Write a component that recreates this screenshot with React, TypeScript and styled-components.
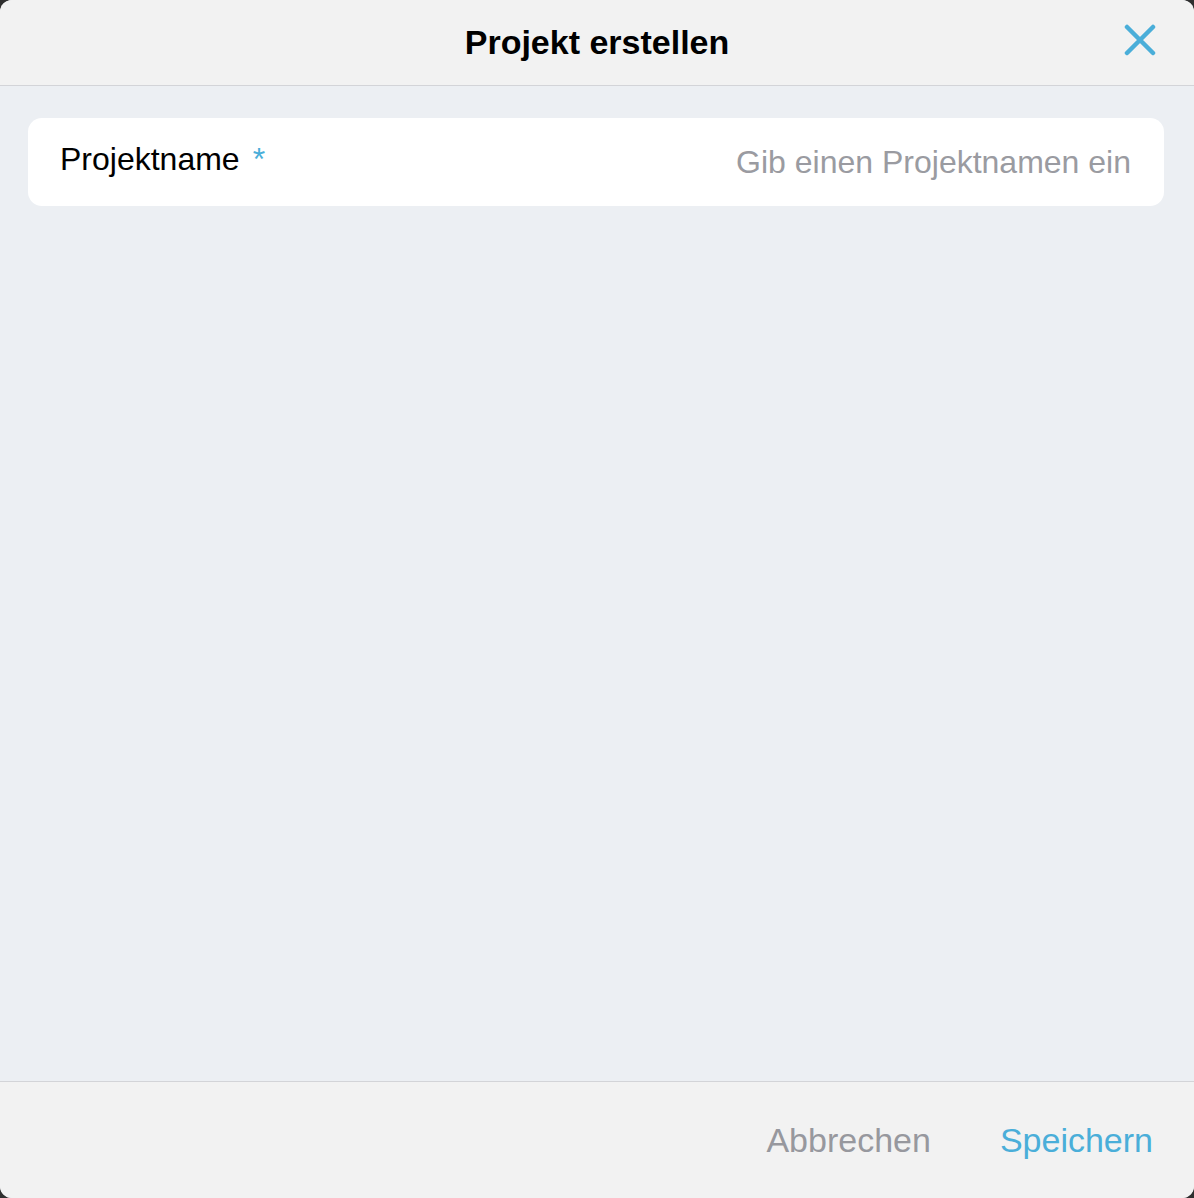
import styled, { createGlobalStyle } from 'styled-components';

const GlobalStyle = createGlobalStyle`
  html, body {
    margin: 0;
    padding: 0;
    background: #2f2f2f;
  }
  * {
    box-sizing: border-box;
  }
`;

const Modal = styled.div`
  width: 1194px;
  height: 1198px;
  display: flex;
  flex-direction: column;
  background: #eceff3;
  border-radius: 12px;
  overflow: hidden;
  font-family: 'Liberation Sans', Arial, sans-serif;
`;

const Header = styled.header`
  height: 86px;
  flex-shrink: 0;
  display: grid;
  grid-template-columns: 1fr auto 1fr;
  align-items: center;
  padding: 0 32px 0 32px;
  background: #f2f2f2;
  border-bottom: 1px solid #d3d4d8;
`;

const Title = styled.h1`
  grid-column: 2;
  margin: 0;
  font-size: 34px;
  font-weight: 700;
  color: #000;
`;

const CloseButton = styled.button`
  justify-self: end;
  width: 44px;
  height: 44px;
  margin-bottom: 6px;
  display: flex;
  align-items: center;
  justify-content: center;
  padding: 0;
  border: none;
  background: none;
  cursor: pointer;
`;

const Body = styled.main`
  flex: 1;
  padding: 32px 30px 32px 28px;
`;

const Field = styled.label`
  height: 88px;
  display: flex;
  align-items: center;
  justify-content: space-between;
  padding: 0 31px 0 32px;
  background: #fff;
  border-radius: 14px;
`;

const FieldLabel = styled.span`
  font-size: 32px;
  color: #000;
  margin-bottom: 5px;
`;

const Required = styled.span`
  margin-left: 13px;
  color: #4aaed9;
`;

const Input = styled.input`
  flex: 1;
  min-width: 0;
  border: none;
  outline: none;
  background: transparent;
  text-align: right;
  font-family: inherit;
  font-size: 32px;
  color: #000;

  &::placeholder {
    color: #9a9ba1;
  }
`;

const Footer = styled.footer`
  height: 117px;
  flex-shrink: 0;
  display: flex;
  align-items: center;
  justify-content: flex-end;
  gap: 69px;
  padding: 0 41px 0 0;
  background: #f2f2f2;
  border-top: 1px solid #d3d4d8;
`;

const TextButton = styled.button<{ $primary?: boolean }>`
  padding: 0;
  border: none;
  background: none;
  font-family: inherit;
  font-size: 34px;
  color: ${(p) => (p.$primary ? '#4aaed9' : '#97989e')};
  cursor: pointer;
`;

function CloseIcon() {
  return (
    <svg width="32" height="32" viewBox="0 0 32 32" fill="none">
      <path
        d="M3 3 L29 29 M29 3 L3 29"
        stroke="#4aaed9"
        strokeWidth="4.5"
        strokeLinecap="round"
      />
    </svg>
  );
}

export default function App() {
  return (
    <>
      <GlobalStyle />
      <Modal>
        <Header>
          <Title>Projekt erstellen</Title>
          <CloseButton aria-label="Schließen">
            <CloseIcon />
          </CloseButton>
        </Header>
        <Body>
          <Field>
            <FieldLabel>
              Projektname<Required>*</Required>
            </FieldLabel>
            <Input placeholder="Gib einen Projektnamen ein" />
          </Field>
        </Body>
        <Footer>
          <TextButton>Abbrechen</TextButton>
          <TextButton $primary>Speichern</TextButton>
        </Footer>
      </Modal>
    </>
  );
}
